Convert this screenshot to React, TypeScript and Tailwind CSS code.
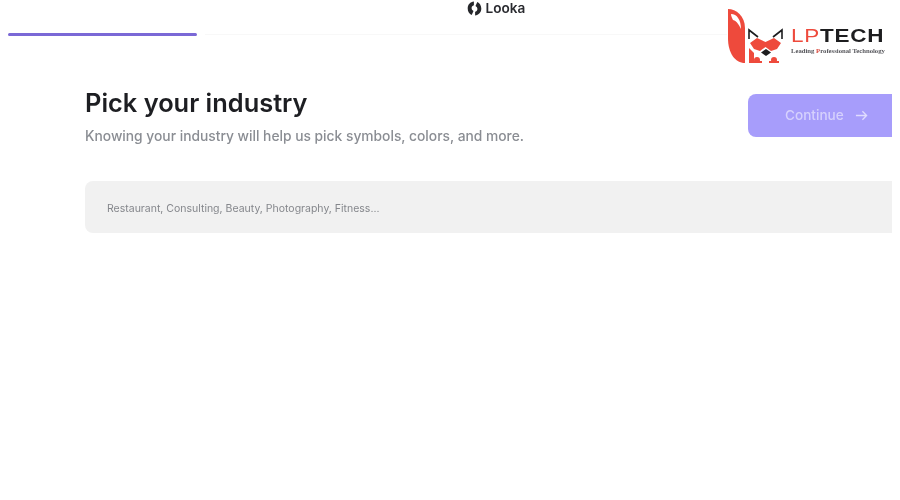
export default function App() {
  return (
    <div className="relative w-[900px] h-[500px] overflow-hidden bg-white font-['Inter','Liberation_Sans',sans-serif]">
      <div className="w-[892px]">
        <header className="h-[33px] flex justify-center">
          <div className="flex items-start gap-1 h-4 ml-[100px] blur-[0.4px]">
            <svg width="15" height="15" viewBox="0 0 14 15" fill="#26272b" className="mt-px">
              <path d="M6.4 .5 C2.8 .8 .2 3.6 .2 7.4 C.2 10.4 1.8 13 4.2 14 L6 10 C4.6 9.2 4.1 8.2 4.1 7 C4.1 5.6 5 4.6 6.4 4.2 Z" />
              <path d="M7.6 14.5 C11.2 14.2 13.8 11.4 13.8 7.6 C13.8 4.6 12.2 2 9.8 1 L8 5 C9.4 5.8 9.9 6.8 9.9 8 C9.9 9.4 9 10.4 7.6 10.8 Z" />
            </svg>
            <span className="text-[13.6px] leading-[16px] font-semibold text-[#2a2b30]">Looka</span>
          </div>
        </header>
        <div className="h-[3px] pl-2 flex items-center">
          <div className="w-[189px] h-[3px] bg-[#7a68d6] rounded-full blur-[0.3px]" />
          <div className="ml-2 flex-1 h-px bg-[#f8f8f8]" />
        </div>
        <main className="pl-[85px] pt-[53px]">
          <div className="flex justify-between items-start">
            <div className="blur-[0.35px]">
              <h1 className="text-[25.4px] leading-[27px] font-semibold text-[#1d1e22]">Pick your industry</h1>
              <p className="mt-[11px] text-[13.8px] leading-[18px] font-medium text-[#8a8d93]">
                Knowing your industry will help us pick symbols, colors, and more.
              </p>
            </div>
            <button className="mt-[5px] w-[144px] h-[43px] rounded-l-lg bg-[#a79dfb] flex items-center gap-[11px] pl-[37px] text-[13.6px] font-medium text-[#d6d1fd] blur-[0.35px]">
              Continue
              <svg width="13" height="13" viewBox="0 0 14 14" fill="none" stroke="#e0dcfe" strokeWidth="1.4">
                <path d="M1 7H12.5M8 2.5L12.5 7L8 11.5" />
              </svg>
            </button>
          </div>
          <div className="mt-[36px] h-[52px] rounded-l-lg bg-[#f1f1f1] flex items-center pl-[22px] pt-1 text-[10.5px] text-[#85878c] blur-[0.3px]">
            Restaurant, Consulting, Beauty, Photography, Fitness...
          </div>
        </main>
      </div>

      <div className="absolute left-[727px] top-[8px] w-[165px] h-[58px] bg-white blur-[0.3px]">
        <svg width="60" height="58" viewBox="0 0 60 58" className="absolute left-0 top-0">
          <path d="M1 1 C9 1 18 8 18 20 L18 55 C8 55 1 45 1 30 Z" fill="#ee4a3c" />
          <path d="M4 6 C10 6 14 12 14 21 C12 17 10 13 6 12 C5 10 4 8 4 6 Z" fill="#ffffff" />
          <path d="M22 31 L22 22 L31 29" fill="none" stroke="#1d1d1f" strokeWidth="1.6" />
          <path d="M55 31 L55 22 L46 29" fill="none" stroke="#1d1d1f" strokeWidth="1.6" />
          <path d="M23 35 L30 30 L38.5 34 L47 30 L54 35 L50 41 L44 43 L38.5 39 L33 43 L27 41 Z" fill="#ee4a3c" />
          <path d="M39 41 L44 44.5 L39 48 L34 44.5 Z" fill="#1d1d1f" />
          <path d="M22 40 L27 45 L27 55 L22 55 Z" fill="#ee4a3c" />
          <circle cx="30" cy="52" r="3" fill="#ee4a3c" />
          <rect x="25" y="53" width="10" height="2" fill="#ee4a3c" />
          <circle cx="47" cy="52" r="3" fill="#ee4a3c" />
          <rect x="42" y="53" width="10" height="2" fill="#ee4a3c" />
        </svg>
        <div className="absolute left-[64px] top-[19px] origin-left scale-x-[1.25] text-[18px] leading-[18px] tracking-[0.6px] font-['Liberation_Sans',sans-serif] whitespace-nowrap text-[#1d1d1f]">
          <span className="text-[#ee4a3c]">LP</span>
          <span className="font-bold">TECH</span>
        </div>
        <div className="absolute left-[64px] top-[39px] text-[6.7px] leading-[7px] font-bold font-['Liberation_Serif',serif] whitespace-nowrap text-[#55555a]">
          Leading <span className="text-[#d9483c]">P</span>rofessional Technology
        </div>
      </div>
    </div>
  );
}
